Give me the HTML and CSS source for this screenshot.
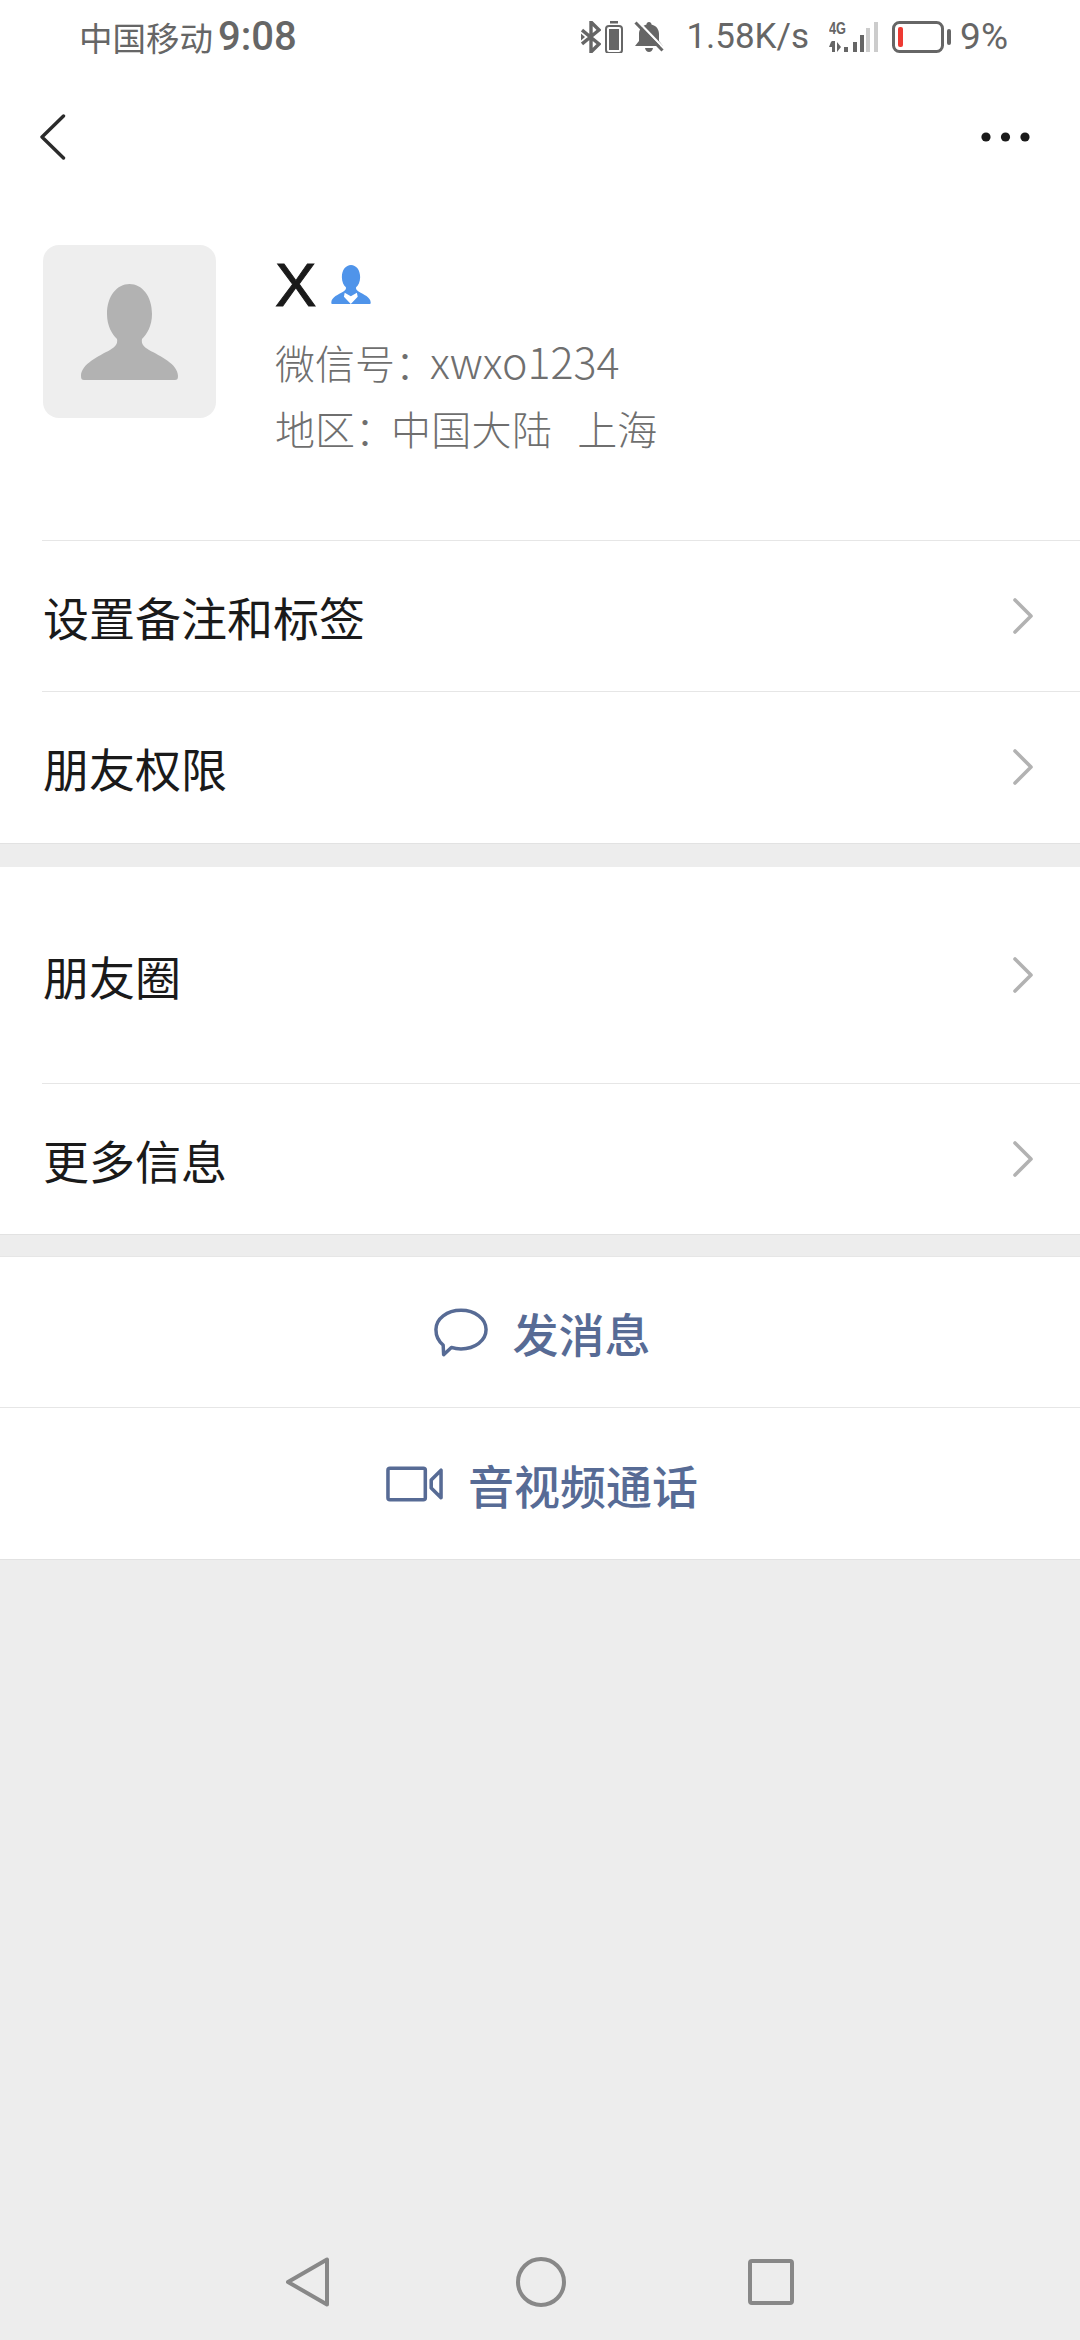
FILE: index.html
```html
<!DOCTYPE html>
<html lang="zh-CN">
<head>
<meta charset="utf-8">
<title>详细资料</title>
<link rel="stylesheet" href="styles.css">
</head>
<body>
<div class="page">
  <header class="status">
    <div class="status-left"><span class="carrier">中国移动</span><span class="clock">9:08</span></div>
    <div class="status-right">
      <svg class="ic-bt" width="20" height="32" viewBox="0 0 20 32" fill="none" stroke="#666" stroke-width="3.4"><path d="M1 9l17 14-8 8V1l8 8L1 23"/><path d="M0 12.5l4 3.5-4 3.500z" fill="#666" stroke="none"/></svg>
      <svg class="ic-batt" width="18" height="32" viewBox="0 0 18 32"><rect x="5" y="0" width="8" height="2.500" fill="#666"/><rect x="1" y="5" width="16" height="27" rx="3" fill="none" stroke="#666" stroke-width="2"/><rect x="4" y="8" width="10" height="21" fill="#666"/></svg>
      <svg class="ic-bell" width="30" height="32" viewBox="0 0 30 32"><path d="M15 1c1.500 0 2.500 1 2.500 2.500C23 5 25 9 25 13v7l4 5H1l4-5v-7C5 9 7 5 12.500 3.500 12.500 2 13.500 1 15 1z" fill="#666"/><path d="M11 27h8c-.5 2.500-2 4-4 4s-3.500-1.500-4-4z" fill="#666"/><path d="M3.500 0l27 28" stroke="#fff" stroke-width="2.500"/><path d="M1.500 1.500l27 28" stroke="#666" stroke-width="3"/></svg>
      <span class="speed">1.58K/s</span>
      <svg class="ic-signal" width="50" height="33" viewBox="0 0 50 33"><text class="net" x="0" y="13" textLength="17" lengthAdjust="spacingAndGlyphs">4G</text><path d="M2 21l-2 5h3v5h3V20H3zM8 21v10l4-5zM15 26h4v5h-4zM24 21h4v10h-4zM31 14h4v17h-4z" fill="#666"/><path d="M37 7h4v24h-4zM45 1h4v30h-4z" fill="#ccc"/></svg>
      <svg class="ic-power" width="60" height="32" viewBox="0 0 60 32"><rect x="1.500" y="1.500" width="49" height="29" rx="6" fill="none" stroke="#666" stroke-width="3"/><rect x="6" y="6" width="5" height="20" rx="2" fill="#ee3a33"/><rect x="55" y="8" width="4" height="16" rx="2" fill="#666"/></svg>
      <span class="percent">9%</span>
    </div>
  </header>

  <nav class="navbar">
    <svg width="26" height="46" viewBox="0 0 26 46" fill="none" stroke="#2b2b2b" stroke-width="3.400" stroke-linecap="round" stroke-linejoin="round"><path d="M23.500 2L2 23l21.500 21"/></svg>
    <svg width="50" height="10" viewBox="0 0 50 10" fill="#1a1a1a"><circle cx="5" cy="5" r="4.600"/><circle cx="24.500" cy="5" r="4.600"/><circle cx="44" cy="5" r="4.600"/></svg>
  </nav>

  <section class="profile">
    <div class="avatar">
      <svg width="97" height="96" viewBox="0 0 97 96" fill="#b2b2b2"><path d="M48.500 0C36 0 26 12 26 30c0 12 5 20 10 25 1 5-2 8-7 11C18 72 0 80 0 92c0 3 1 4 3 4h91c2 0 3-1 3-4 0-12-18-20-29-26-5-3-8-6-7-11 5-5 10-13 10-25C71 12 61 0 48.500 0z"/></svg>
    </div>
    <div class="info">
      <div class="name-line">
        <span class="name">X</span>
        <svg class="badge" width="40" height="39" viewBox="0 0 97 96" fill="#4f94ea"><path d="M48.500 0C36 0 26 12 26 30c0 12 5 20 10 25 1 5-2 8-7 11C18 72 0 80 0 92c0 3 1 4 3 4h91c2 0 3-1 3-4 0-12-18-20-29-26-5-3-8-6-7-11 5-5 10-13 10-25C71 12 61 0 48.500 0z"/><path d="M33 68l15 9 15-9 2 10-17 18-17-18z" fill="#fff"/></svg>
      </div>
      <div class="meta">微信号：<span class="wxid">xwxo1234</span></div>
      <div class="meta">地区：<span class="region">中国大陆</span><span class="city">上海</span></div>
    </div>
  </section>

  <section class="group group-first">
    <div class="row"><span>设置备注和标签</span><svg class="chev" width="20" height="36" viewBox="0 0 20 36" fill="none" stroke="#b2b2b2" stroke-width="3.600" stroke-linecap="round" stroke-linejoin="round"><path d="M2 2l16 16L2 34"/></svg></div>
    <div class="row"><span>朋友权限</span><svg class="chev" width="20" height="36" viewBox="0 0 20 36" fill="none" stroke="#b2b2b2" stroke-width="3.600" stroke-linecap="round" stroke-linejoin="round"><path d="M2 2l16 16L2 34"/></svg></div>
  </section>

  <section class="group group-gap">
    <div class="row row-tall"><span>朋友圈</span><svg class="chev" width="20" height="36" viewBox="0 0 20 36" fill="none" stroke="#b2b2b2" stroke-width="3.600" stroke-linecap="round" stroke-linejoin="round"><path d="M2 2l16 16L2 34"/></svg></div>
    <div class="row"><span>更多信息</span><svg class="chev" width="20" height="36" viewBox="0 0 20 36" fill="none" stroke="#b2b2b2" stroke-width="3.600" stroke-linecap="round" stroke-linejoin="round"><path d="M2 2l16 16L2 34"/></svg></div>
  </section>

  <section class="actions">
    <div class="action">
      <svg width="54" height="49" viewBox="0 0 56 50" fill="none" stroke="#576b95" stroke-width="3.600" stroke-linejoin="round"><path d="M28 2c14.500 0 26 8.500 26 20s-11.500 20-26 20c-3.500 0-7-.5-10-1.500L10 48l-.5-10C5 34.500 2 28.500 2 22 2 10.500 13.500 2 28 2z"/></svg>
      <span>发消息</span>
    </div>
    <div class="action">
      <svg width="57" height="36" viewBox="0 0 58 36" fill="none" stroke="#576b95" stroke-width="3.600" stroke-linejoin="round"><rect x="2" y="2" width="38" height="32" rx="2"/><path d="M56 4v28L46 22v-8z"/></svg>
      <span>音视频通话</span>
    </div>
  </section>

  <footer class="sysnav">
    <svg class="nav-back" width="44" height="50" viewBox="0 0 44 50" fill="none" stroke="#888" stroke-width="4" stroke-linejoin="round"><path d="M41 2.500v45L2 25z"/></svg>
    <svg width="50" height="50" viewBox="0 0 50 50" fill="none" stroke="#888" stroke-width="4"><circle cx="25" cy="25" r="23"/></svg>
    <svg width="46" height="46" viewBox="0 0 46 46" fill="none" stroke="#888" stroke-width="4" stroke-linejoin="round"><rect x="2" y="2" width="42" height="42" rx="2"/></svg>
  </footer>
</div>
</body>
</html>
```

FILE: styles.css
```css
* { box-sizing: border-box; }
html, body { margin: 0; padding: 0; }
body {
  font-family: "Noto Sans CJK SC", "Noto Sans", sans-serif;
  background: #ededed;
  color: #1a1a1a;
}
.page {
  width: 1080px;
  height: 2340px;
  display: flex;
  flex-direction: column;
  overflow: hidden;
}
.status {
  height: 74px;
  background: #fff;
  display: flex;
  align-items: center;
  justify-content: space-between;
  padding: 0 72px 0 79px;
  color: #666;
}
.status-left { display: flex; align-items: center; gap: 5px; }
.carrier { font-size: 33.500px; line-height: 40px; }
.clock { font-family: Roboto, sans-serif; font-size: 40px; font-weight: 500; line-height: 40px; }
.status-right { display: flex; align-items: center; }
.speed, .percent { font-family: Roboto, sans-serif; font-size: 35px; line-height: 40px; }
.ic-batt { margin-left: 4px; }
.ic-bell { margin-left: 11px; }
.speed { margin-left: 22px; }
.ic-signal { margin-left: 20px; }
.ic-power { margin-left: 13px; }
.percent { margin-left: 8px; font-size: 37px; }
.net { font-family: "Liberation Sans", sans-serif; font-size: 16px; font-weight: 700; fill: #666; }
.navbar {
  height: 126px;
  background: #fff;
  display: flex;
  align-items: center;
  justify-content: space-between;
  padding: 0 49px 0 40px;
}
.profile {
  background: #fff;
  display: flex;
  padding: 45px 0 79px 43px;
  gap: 59px;
}
.avatar {
  width: 173px;
  height: 173px;
  border-radius: 16px;
  background: #eee;
  display: flex;
  align-items: center;
  justify-content: center;
  flex: none;
}
.info { margin-top: 7px; }
.name-line {
  display: flex;
  align-items: center;
  gap: 15px;
  height: 66px;
  margin-bottom: 9px;
}
.name {
  font-family: "Liberation Sans", sans-serif;
  font-size: 62px;
  line-height: 66px;
  color: #1a1a1a;
  -webkit-text-stroke: 1px #1a1a1a;
}
.badge { margin-top: -2px; }
.meta { font-size: 40px; line-height: 66px; color: #6f6f6f; white-space: nowrap; font-weight: 300; }
.wxid { margin-left: -5px; font-size: 43px; }
.region { margin-left: -4px; letter-spacing: .3px; }
.city { margin-left: 25px; }
.group { background: #fff; border-bottom: 1px solid #e2e2e2; }
.group-first { padding-bottom: 1px; }
.group-gap { margin-top: 23px; }
.row {
  margin-left: 42px;
  padding: 0 47px 0 1px;
  height: 151px;
  border-top: 1px solid #e6e6e6;
  display: flex;
  align-items: center;
  justify-content: space-between;
  font-size: 46px;
  color: #1a1a1a;
}
.row-tall { height: 216px; border-top: 0; }
.actions { margin-top: 21px; background: #fff; border-bottom: 1px solid #e2e2e2; border-top: 1px solid #e6e6e6; }
.action {
  height: 150px;
  display: flex;
  align-items: center;
  justify-content: center;
  gap: 25px;
  padding-left: 4px;
  font-size: 46px;
  font-weight: 500;
  color: #576b95;
}
.action + .action { height: 152px; border-top: 1px solid #e6e6e6; }
.sysnav {
  margin-top: auto;
  height: 83px;
  padding: 0 0 33px 0;
  display: flex;
  align-items: center;
  justify-content: center;
  gap: 182px;
  flex: none;
}
.nav-back { margin-right: 4px; }
```
